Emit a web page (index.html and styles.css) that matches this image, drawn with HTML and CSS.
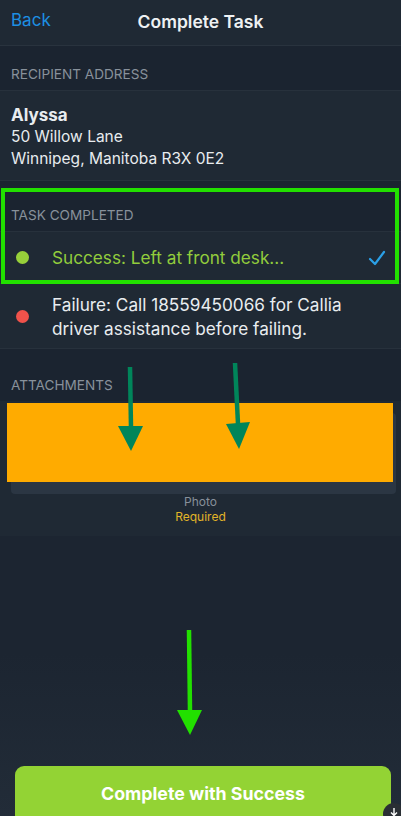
FILE: index.html
```html
<!DOCTYPE html>
<html>
<head>
<meta charset="utf-8">
<link rel="stylesheet" href="styles.css">
</head>
<body>
<div class="screen">
  <header class="nav">
    <span class="back">Back</span>
    <span class="title">Complete Task</span>
  </header>

  <div class="sec-head h1">RECIPIENT ADDRESS</div>
  <div class="cell address">
    <div class="name">Alyssa</div>
    <div class="line">50 Willow Lane</div>
    <div class="line">Winnipeg, Manitoba R3X 0E2</div>
  </div>

  <div class="sec-head h2">TASK COMPLETED</div>
  <div class="cell option success">
    <span class="dot green"></span>
    <span class="opt-text">Success: Left at front desk...</span>
    <svg class="check" width="18" height="16" viewBox="0 0 18 16"><path d="M2 9 L7 14 L16 2" fill="none" stroke="#2a9fe6" stroke-width="2.2" stroke-linecap="round" stroke-linejoin="round"/></svg>
  </div>
  <div class="cell option failure">
    <span class="dot red"></span>
    <span class="opt-text">Failure: Call 18559450066 for Callia driver assistance before failing.</span>
  </div>

  <div class="sec-head h3">ATTACHMENTS</div>
  <div class="attachments">
    <div class="att-card"></div>
    <div class="att-label">Photo</div>
    <div class="att-req">Required</div>
    <div class="orange"></div>
  </div>

  <div class="spacer"></div>
  <div class="footer">
    <button class="cta">Complete with Success</button>
  </div>

  <div class="anno-box"></div>
  <svg class="arrows" width="401" height="816" viewBox="0 0 401 816">
    <path d="M130 367 L131 428" stroke="#00855a" stroke-width="4.5"/>
    <polygon points="118,426 143,426 131,451" fill="#00855a"/>
    <path d="M235 363 L238 424" stroke="#00855a" stroke-width="4.5"/>
    <polygon points="226,424 250,422 239,449" fill="#00855a"/>
    <path d="M189 630 L190 712" stroke="#22e000" stroke-width="4.5"/>
    <polygon points="177,710 202,710 190,735" fill="#22e000"/>
  </svg>
  <div class="dl-badge">
    <svg width="10" height="10" viewBox="0 0 10 10"><path d="M5 1 V8 M2 5.5 L5 8.5 L8 5.5" fill="none" stroke="#fff" stroke-width="1.4"/></svg>
  </div>
</div>
</body>
</html>
```

FILE: styles.css
```css
* { box-sizing: border-box; }
html, body { margin: 0; padding: 0; }
body {
  background: #1c2531;
  font-family: "Inter", "Roboto", "Liberation Sans", sans-serif;
  color: #e8ecef;
  width: 401px;
  height: 816px;
  overflow: hidden;
}
.screen {
  position: relative;
  width: 401px;
  height: 816px;
  display: flex;
  flex-direction: column;
  background: linear-gradient(#1c2531 80%, #222c38 100%);
}
.nav {
  height: 46px;
  flex: none;
  background: #1f2934;
  border-bottom: 1px solid #29333e;
  display: flex;
  align-items: center;
  justify-content: center;
  position: relative;
  padding-top: 0;
}
.back {
  position: absolute;
  left: 11px;
  top: 10px;
  color: #1d8fe3;
  font-size: 17px;
}
.title {
  font-size: 17.5px;
  font-weight: 600;
  color: #eef1f3;
  margin-bottom: 3px;
}
.sec-head {
  flex: none;
  background: #1b2430;
  color: #88919b;
  font-size: 13.6px;
  padding-left: 11px;
  display: flex;
  align-items: flex-end;
  border-bottom: 1px solid #27313c;
}
.h1 { height: 45px; padding-bottom: 8px; }
.h2 { height: 51px; padding-bottom: 8px; }
.h3 { height: 52px; padding-bottom: 8px; border-bottom: none; }
.cell {
  flex: none;
  background: #1f2934;
  border-bottom: 1px solid #27313c;
}
.address {
  height: 90px;
  padding: 13px 11px 0;
}
.name { font-size: 17px; font-weight: 700; line-height: 22px; }
.line { font-size: 15.5px; line-height: 22px; }
.option {
  display: flex;
  align-items: center;
  padding: 0 16px 0 16px;
}
.success { height: 52px; }
.failure { height: 65px; }
.dot {
  width: 13px;
  height: 13px;
  border-radius: 50%;
  flex: none;
  margin-right: 23px;
}
.green { background: #97d03a; }
.red { background: #f0524b; }
.opt-text { font-size: 17.2px; line-height: 24px; flex: 1; }
.success .opt-text { color: #92cc3c; }
.failure .opt-text { color: #e9edf0; padding-top: 1px; padding-right: 20px; }
.check { flex: none; margin-right: -1px; }
.attachments {
  flex: none;
  height: 135px;
  background: #1f2934;
  position: relative;
  display: flex;
  flex-direction: column;
  align-items: center;
  padding-top: 12px;
}
.att-card {
  width: 385px;
  margin-left: 5px;
  height: 81px;
  background: #2b3643;
  border-radius: 4px;
}
.att-label { color: #87909a; font-size: 12px; margin-top: 0; line-height: 15px; }
.att-req { color: #e2b428; font-size: 12px; line-height: 15px; }
.orange {
  position: absolute;
  left: 7px;
  top: 2px;
  width: 386px;
  height: 79px;
  background: #ffab00;
}
.spacer { flex: 1; }
.footer {
  flex: none;
  height: 50px;
  padding: 0 10px 0 15px;
}
.cta {
  width: 376px;
  height: 62px;
  border: none;
  border-radius: 9px;
  background: #93d334;
  color: #ffffff;
  font-family: inherit;
  font-size: 17.8px;
  font-weight: 700;
  padding: 0 0 8px;
  display: block;
}
.anno-box {
  position: absolute;
  left: 1px;
  top: 188px;
  width: 398px;
  height: 96px;
  border: 4.5px solid #22e000;
}
.arrows {
  position: absolute;
  left: 0;
  top: 0;
  pointer-events: none;
}
.dl-badge {
  position: absolute;
  left: 383px;
  top: 803px;
  width: 22px;
  height: 22px;
  border-radius: 50%;
  background: #2a2f34;
  display: flex;
  justify-content: center;
  padding-top: 4px;
}
```
